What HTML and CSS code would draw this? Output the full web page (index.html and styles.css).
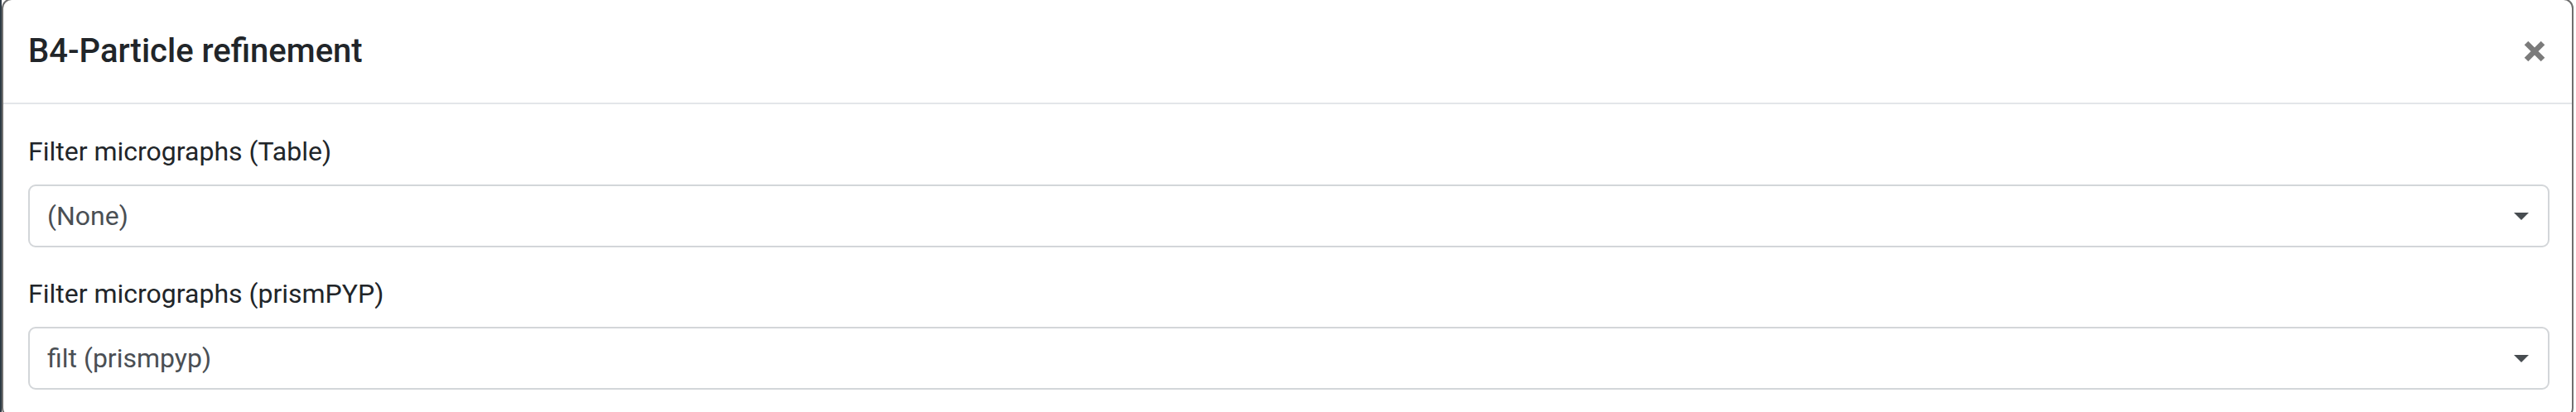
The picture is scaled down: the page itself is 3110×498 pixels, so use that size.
FILE: index.html
```html
<!DOCTYPE html>
<html lang="en">
<head>
<meta charset="utf-8">
<title>B4-Particle refinement</title>
<link rel="stylesheet" href="styles.css">
</head>
<body>
<div class="modal">
  <div class="modal-header">
    <h5 class="modal-title">B4-Particle refinement</h5>
    <button class="close" type="button" aria-label="Close">
      <svg width="26" height="26" viewBox="0 0 26 26"><path d="M3 3 L23 23 M23 3 L3 23" stroke="#7b7b7b" stroke-width="6.5" fill="none"/></svg>
    </button>
  </div>
  <div class="modal-body">
    <div class="form-group">
      <label class="form-label">Filter micrographs (Table)</label>
      <div class="select">
        <span class="select-value">(None)</span>
        <svg class="caret" width="18" height="9" viewBox="0 0 18 9"><polygon points="0,0 18,0 9,9" fill="#474c50"/></svg>
      </div>
    </div>
    <div class="form-group">
      <label class="form-label">Filter micrographs (prismPYP)</label>
      <div class="select">
        <span class="select-value">filt (prismpyp)</span>
        <svg class="caret" width="18" height="9" viewBox="0 0 18 9"><polygon points="0,0 18,0 9,9" fill="#474c50"/></svg>
      </div>
    </div>
  </div>
</div>
</body>
</html>
```

FILE: styles.css
```css
html, body {
  margin: 0;
  padding: 0;
  height: 100%;
  overflow: hidden;
}
body {
  background: linear-gradient(to right, #2d3a44 2px, #ffffff 2px);
  font-family: Roboto, "Liberation Sans", Arial, sans-serif;
  color: #212529;
}
.modal {
  margin-left: 2px;
  margin-top: -2px;
  width: 3105px;
  box-sizing: border-box;
  border: 2px solid #6e6e6e;
  border-radius: 12px;
  background: #fff;
}
.modal-header {
  height: 126px;
  box-sizing: border-box;
  display: flex;
  align-items: center;
  justify-content: space-between;
  padding: 0 32px 0 30px;
  border-bottom: 2px solid #e3e6e9;
}
.modal-title {
  margin: 0;
  font-size: 40px;
  font-weight: 500;
  line-height: 60px;
  color: #212529;
}
.close {
  border: 0;
  background: transparent;
  padding: 0;
  width: 26px;
  height: 26px;
  display: flex;
  align-items: center;
  justify-content: center;
  cursor: pointer;
}
.modal-body {
  padding: 33px 27px 0 30px;
}
.form-group {
  margin-bottom: 32px;
}
.form-label {
  display: block;
  font-size: 32px;
  line-height: 48px;
  margin-bottom: 16px;
  color: #212529;
}
.select {
  height: 76px;
  box-sizing: border-box;
  border: 2px solid #d3d6d9;
  border-radius: 9px;
  display: flex;
  align-items: center;
  justify-content: space-between;
  padding: 0 23px 0 21px;
}
.select-value {
  font-size: 32px;
  color: #4a4f54;
}
.caret {
  display: block;
}
```
